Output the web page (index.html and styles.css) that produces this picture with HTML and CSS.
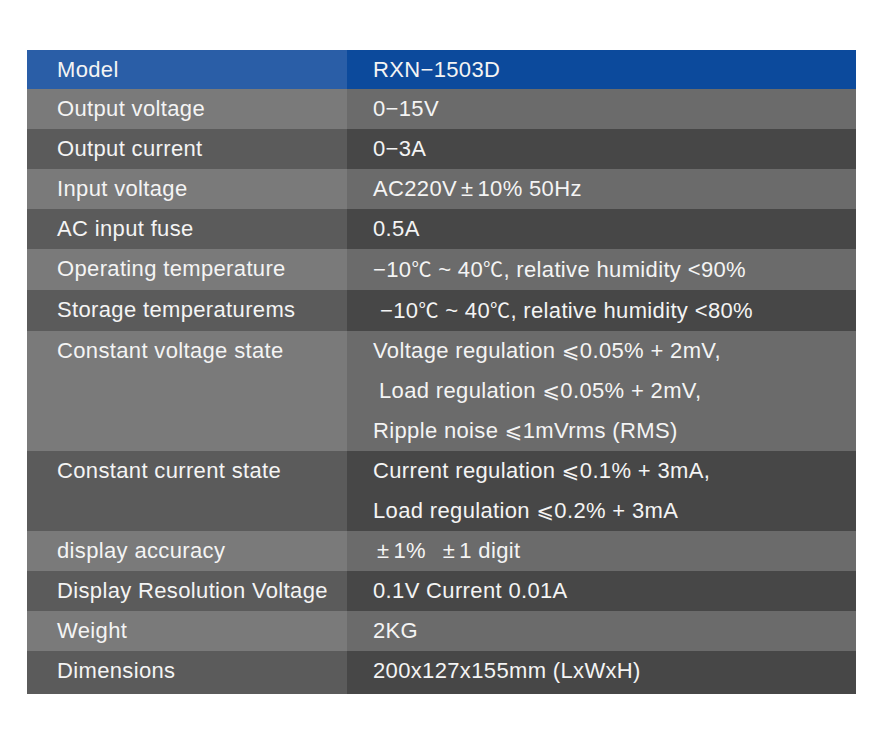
FILE: index.html
```html
<!DOCTYPE html>
<html>
<head>
<meta charset="utf-8">
<link rel="stylesheet" href="styles.css">
</head>
<body>
<div class="page">
  <div class="spec">
    <div class="row head"><div class="k">Model</div><div class="v">RXN−1503D</div></div>
    <div class="row light"><div class="k">Output voltage</div><div class="v">0−15V</div></div>
    <div class="row dark"><div class="k">Output current</div><div class="v">0−3A</div></div>
    <div class="row light"><div class="k">Input voltage</div><div class="v">AC220V<span class="sym">±</span>10% 50Hz</div></div>
    <div class="row dark"><div class="k">AC input fuse</div><div class="v">0.5A</div></div>
    <div class="row light"><div class="k">Operating temperature</div><div class="v">−10<span class="cel">℃</span> ~ 40<span class="cel">℃</span>, relative humidity &lt;90%</div></div>
    <div class="row dark"><div class="k">Storage temperaturems</div><div class="v indent">−10<span class="cel">℃</span> ~ 40<span class="cel">℃</span>, relative humidity &lt;80%</div></div>
    <div class="row light"><div class="k">Constant voltage state</div><div class="v">
      <div>Voltage regulation <span class="le">⩽</span>0.05% + 2mV,</div>
      <div class="indent">Load regulation <span class="le">⩽</span>0.05% + 2mV,</div>
      <div>Ripple noise <span class="le">⩽</span>1mVrms (RMS)</div>
    </div></div>
    <div class="row dark"><div class="k">Constant current state</div><div class="v">
      <div>Current regulation <span class="le">⩽</span>0.1% + 3mA,</div>
      <div>Load regulation <span class="le">⩽</span>0.2% + 3mA</div>
    </div></div>
    <div class="row light"><div class="k">display accuracy</div><div class="v indent-s"><span class="sym">±</span>1%&nbsp; <span class="sym">±</span>1 digit</div></div>
    <div class="row dark"><div class="k">Display Resolution Voltage</div><div class="v">0.1V Current 0.01A</div></div>
    <div class="row light"><div class="k">Weight</div><div class="v">2KG</div></div>
    <div class="row dark last"><div class="k">Dimensions</div><div class="v">200x127x155mm (LxWxH)</div></div>
  </div>
</div>
</body>
</html>
```

FILE: styles.css
```css
html, body {
  margin: 0;
  padding: 0;
  background: #ffffff;
}

.page {
  padding: 50px 0 0 27px;
}

.spec {
  width: 829px;
  display: flex;
  flex-direction: column;
  font-family: "Liberation Sans", Arial, "DejaVu Sans", "Noto Sans CJK SC", sans-serif;
  font-size: 22px;
  color: #f4f4f4;
  letter-spacing: 0.35px;
}

.row {
  display: grid;
  grid-template-columns: 320px 509px;
}

.k, .v {
  line-height: 40px;
}

.k {
  padding-left: 30px;
}

.v {
  padding-left: 26px;
}

.head .k, .head .v {
  line-height: 39px;
}

.head .k { background: #2a5ea7; }
.head .v { background: #0c4a9c; }

.light .k { background: #7a7a7a; }
.light .v { background: #6b6b6b; }

.dark .k { background: #5b5b5b; }
.dark .v { background: #474747; }

.last .k, .last .v {
  padding-bottom: 3px;
}

.v.indent {
  padding-left: 33px;
}

.v.indent-s {
  padding-left: 30px;
}

.v > .indent {
  padding-left: 6px;
}

.sym {
  margin: 0 4px;
}

.v.indent-s .sym:first-child {
  margin-left: 0;
}

.cel {
  font-family: "Noto Sans CJK SC", "DejaVu Sans", sans-serif;
  font-size: 20px;
}

.le {
  font-family: "DejaVu Sans", sans-serif;
  font-size: 21px;
}
```
